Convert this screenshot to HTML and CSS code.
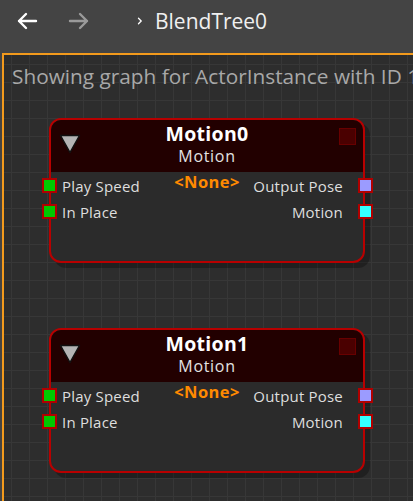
FILE: index.html
```html
<!DOCTYPE html>
<html>
<head>
<meta charset="utf-8">
<link rel="stylesheet" href="styles.css">
</head>
<body>
<div class="app">
  <header class="topbar">
    <svg class="nav-arrow" width="22" height="20" viewBox="0 0 22 20"><path d="M20 10H3M10 3L3 10L10 17" fill="none" stroke="#ffffff" stroke-width="2.4" stroke-linecap="round" stroke-linejoin="round"/></svg>
    <svg class="nav-arrow fwd" width="22" height="20" viewBox="0 0 22 20"><path d="M2 10H19M12 3L19 10L12 17" fill="none" stroke="#9a9a9a" stroke-width="2.4" stroke-linecap="round" stroke-linejoin="round"/></svg>
    <svg class="crumb-sep" width="6" height="8" viewBox="0 0 6 8"><path d="M1.5 1.2L4.2 4L1.5 6.8" fill="none" stroke="#ffffff" stroke-width="1.3" stroke-linecap="round"/></svg>
    <span class="crumb">BlendTree0</span>
  </header>
  <main class="canvas">
    <div class="info">Showing graph for ActorInstance with ID 1</div>
    <div class="node">
      <div class="node-head">
        <svg class="collapse" width="22" height="20" viewBox="0 0 22 20"><path d="M1.5 1.5H20.5L11 18.5Z" fill="#b4b4b4" stroke="#111" stroke-width="1.5" stroke-linejoin="round"/></svg>
        <div class="title">Motion0</div>
        <div class="subtitle">Motion</div>
        <span class="vis-box"></span>
      </div>
      <div class="node-body">
        <div class="ports in">
          <div class="port"><span class="pin green"></span>Play Speed</div>
          <div class="port"><span class="pin green"></span>In Place</div>
        </div>
        <div class="none">&lt;None&gt;</div>
        <div class="ports out">
          <div class="port">Output Pose<span class="pin lav"></span></div>
          <div class="port">Motion<span class="pin cyan"></span></div>
        </div>
      </div>
    </div>
    <div class="node">
      <div class="node-head">
        <svg class="collapse" width="22" height="20" viewBox="0 0 22 20"><path d="M1.5 1.5H20.5L11 18.5Z" fill="#b4b4b4" stroke="#111" stroke-width="1.5" stroke-linejoin="round"/></svg>
        <div class="title">Motion1</div>
        <div class="subtitle">Motion</div>
        <span class="vis-box"></span>
      </div>
      <div class="node-body">
        <div class="ports in">
          <div class="port"><span class="pin green"></span>Play Speed</div>
          <div class="port"><span class="pin green"></span>In Place</div>
        </div>
        <div class="none">&lt;None&gt;</div>
        <div class="ports out">
          <div class="port">Output Pose<span class="pin lav"></span></div>
          <div class="port">Motion<span class="pin cyan"></span></div>
        </div>
      </div>
    </div>
  </main>
</div>
</body>
</html>
```

FILE: styles.css
```css
* { box-sizing: border-box; }
html, body { margin: 0; padding: 0; }
body {
  background: #444444;
  font-family: "Open Sans", "Noto Sans", sans-serif;
  overflow: hidden;
}
.app {
  height: 501px;
  display: flex;
  flex-direction: column;
}
.topbar {
  height: 53px;
  flex: none;
  display: flex;
  align-items: center;
  padding: 0 0 12px 16px;
}
.nav-arrow { display: block; }
.nav-arrow.fwd { margin-left: 30px; }
.crumb-sep { margin-left: 47px; display: block; }
.crumb {
  margin-left: 12px;
  color: #f0f0f0;
  font-size: 21px;
  line-height: 28px;
}
.canvas {
  flex: 1;
  margin-left: 2px;
  border-left: 2px solid #f39a1c;
  border-top: 2px solid #f39a1c;
  background-color: #2d2d2d;
  background-image:
    linear-gradient(to right, #373737 1px, transparent 1px),
    linear-gradient(to bottom, #373737 1px, transparent 1px);
  background-size: 18px 18px;
  background-position: 7px 9px;
  padding: 7px 0 0 8px;
  overflow: hidden;
}
.info {
  color: #a8a8a8;
  font-size: 20.8px;
  line-height: 28px;
  white-space: nowrap;
}
.node {
  width: 316px;
  height: 145px;
  margin: 28px 0 0 37px;
  border: 2px solid #b80000;
  border-radius: 12px;
  background: #2b2b2b;
  box-shadow: 5px 5px 0 rgba(0,0,0,0.28);
}
.node + .node { margin-top: 65px; }
.node-head {
  position: relative;
  height: 52px;
  background: #220000;
  border-radius: 10px 10px 0 0;
  display: flex;
  flex-direction: column;
  align-items: center;
  padding-top: 1px;
}
.collapse {
  position: absolute;
  left: 8px;
  top: 14px;
}
.title {
  color: #ffffff;
  font-weight: 700;
  font-size: 19.5px;
  line-height: 25px;
  letter-spacing: 0.3px;
}
.subtitle {
  color: #e2e2e2;
  font-size: 16px;
  line-height: 20px;
  letter-spacing: 0.7px;
}
.vis-box {
  position: absolute;
  right: 7px;
  top: 8px;
  width: 17px;
  height: 17px;
  background: #4a0000;
  border: 1px solid #680000;
}
.node-body {
  display: grid;
  grid-template-columns: 1fr auto 1fr;
  padding-top: 1px;
}
.ports { display: flex; flex-direction: column; }
.port {
  position: relative;
  height: 26px;
  display: flex;
  align-items: center;
  color: #dedede;
  font-size: 15px;
  letter-spacing: 0.2px;
  white-space: nowrap;
}
.ports.in .port { padding-left: 11px; }
.ports.out .port { justify-content: flex-end; padding-right: 20px; }
.pin {
  position: absolute;
  top: 5px;
  width: 15px;
  height: 15px;
  border: 2px solid #b00000;
}
.ports.in .pin { left: -9px; }
.ports.out .pin { right: -10px; }
.pin.green { background: #00c800; }
.pin.lav { background: #9b9bff; }
.pin.cyan { background: #33ffff; }
.none {
  color: #ff8a00;
  font-weight: 700;
  font-size: 16.5px;
  line-height: 17px;
  letter-spacing: 0.4px;
}
```
